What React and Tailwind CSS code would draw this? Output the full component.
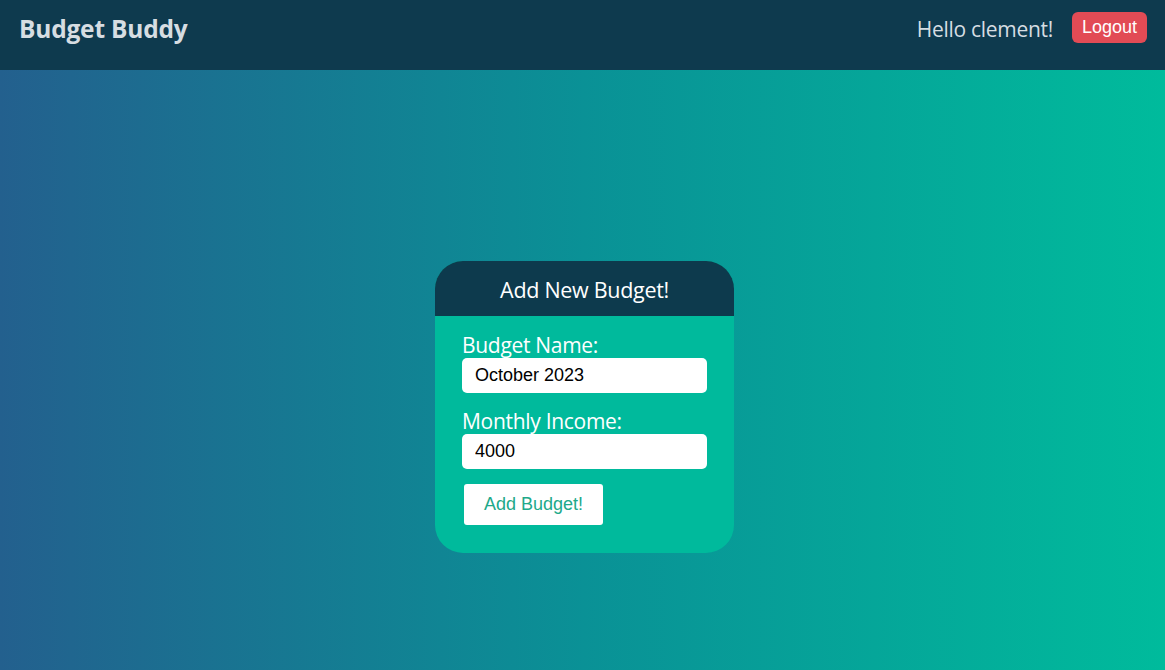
export default function App() {
  const seg = { fontFamily: '"Open Sans", "Noto Sans", sans-serif' };
  const arial = { fontFamily: '"Liberation Sans", Arial, sans-serif' };
  return (
    <div className="w-[1165px] h-[670px] flex flex-col overflow-hidden" style={seg}>
      <header className="h-[70px] bg-[#0e3a4e] flex items-center justify-between pl-[19px] pr-[18px] shrink-0">
        <div className="text-[24.5px] font-bold text-[#d6dde2] tracking-[-0.2px] leading-none mt-[-12px]">Budget Buddy</div>
        <div className="flex items-center gap-[19px] mt-[-12px]">
          <span className="text-[21px] text-[#d6dde2] tracking-[-0.3px] leading-none">Hello clement!</span>
          <button className="h-[31px] px-[10px] rounded-[6px] bg-[#e24b55] text-white text-[18px] leading-none mt-[-4px]" style={arial}>Logout</button>
        </div>
      </header>
      <main className="flex-1 bg-[linear-gradient(to_right,#23608e,#0a9196,#00bb9c)] flex justify-center">
        <div className="mt-[191px] ml-[4px] w-[299px] h-[292px] rounded-[28px] overflow-hidden bg-[#00ba9c] flex flex-col self-start">
          <div className="h-[55px] bg-[#0d3a4d] flex items-center justify-center text-white text-[21.5px] tracking-[-0.3px] pt-[3px]">Add New Budget!</div>
          <div className="px-[27px] pt-[17px] flex flex-col">
            <label className="text-white text-[21px] leading-[25px] tracking-[-0.3px]">Budget Name:</label>
            <input className="h-[35px] w-[245px] rounded-[5px] bg-white px-[13px] text-[18px] text-black outline-none" style={arial} defaultValue="October 2023" />
            <label className="text-white text-[21px] leading-[25px] tracking-[-0.3px] mt-[16px]">Monthly Income:</label>
            <input className="h-[35px] w-[245px] rounded-[5px] bg-white px-[13px] text-[18px] text-black outline-none" style={arial} defaultValue="4000" />
            <button className="mt-[15px] ml-[2px] h-[41px] w-[139px] rounded-[3px] bg-white text-[#20a98a] text-[18px]" style={arial}>Add Budget!</button>
          </div>
        </div>
      </main>
    </div>
  );
}
